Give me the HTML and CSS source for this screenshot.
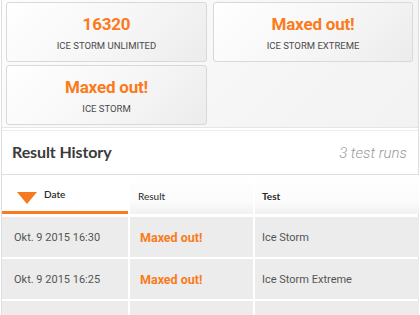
FILE: index.html
```html
<!DOCTYPE html>
<html>
<head>
<meta charset="utf-8">
<link rel="stylesheet" href="styles.css">
</head>
<body>
<div class="app">
  <div class="cards">
    <div class="card">
      <div class="score">16320</div>
      <div class="label">ICE STORM UNLIMITED</div>
    </div>
    <div class="card">
      <div class="score">Maxed out!</div>
      <div class="label">ICE STORM EXTREME</div>
    </div>
    <div class="card">
      <div class="score">Maxed out!</div>
      <div class="label">ICE STORM</div>
    </div>
  </div>
  <div class="history">
    <div class="hist-head">
      <h2 class="hist-title">Result History</h2>
      <span class="hist-count">3 test runs</span>
    </div>
    <div class="table">
      <div class="th th-date active"><span class="tri"></span>Date</div>
      <div class="th th-result">Result</div>
      <div class="th th-test">Test</div>

      <div class="td date">Okt. 9 2015 16:30</div>
      <div class="td result">Maxed out!</div>
      <div class="td test">Ice Storm</div>

      <div class="td date">Okt. 9 2015 16:25</div>
      <div class="td result">Maxed out!</div>
      <div class="td test">Ice Storm Extreme</div>

      <div class="td date"></div>
      <div class="td result"></div>
      <div class="td test"></div>
    </div>
  </div>
</div>
</body>
</html>
```

FILE: styles.css
```css
html, body {
  margin: 0;
  padding: 0;
  background: #fff;
  height: 315px;
  overflow: hidden;
}
.app {
  margin-left: 1px;
  width: 416px;
  border-left: 1px solid #dedede;
  border-right: 1px solid #dedede;
  min-height: 315px;
  font-family: Roboto, "Liberation Sans", sans-serif;
}
.cards {
  display: grid;
  grid-template-columns: 201px 200px;
  grid-auto-rows: 60px;
  column-gap: 6px;
  row-gap: 3px;
  padding: 2px 0 2px 4px;
  background: linear-gradient(135deg, #fdfdfd 0%, #f2f2f2 100%);
  border-bottom: 1px solid #e6e6e6;
}
.card {
  box-sizing: border-box;
  border: 1px solid #d9d9d9;
  border-radius: 3px;
  background: linear-gradient(135deg, #ffffff 0%, #f6f6f6 55%, #ececec 100%);
  box-shadow: 0 0 1px rgba(0,0,0,0.05);
  display: flex;
  flex-direction: column;
  align-items: center;
  padding-top: 11px;
}
.score {
  color: #fb7b1c;
  font-weight: 700;
  font-size: 17px;
  line-height: 20px;
  letter-spacing: -0.2px;
}
.label {
  margin-top: 6px;
  font-size: 9.5px;
  line-height: 11px;
  color: #4a4a4a;
}
.history {
  margin-top: 2px;
  border-top: 1px solid #ececec;
}
.hist-head {
  height: 43px;
  display: flex;
  align-items: center;
  justify-content: space-between;
  padding: 0 11px 0 10px;
  border-bottom: 1px solid #dddddd;
}
.hist-title {
  margin: 0;
  font-family: Lato, "Liberation Sans", sans-serif;
  font-weight: 700;
  font-size: 16px;
  color: #3a3a3a;
  letter-spacing: -0.1px;
  padding-bottom: 2px;
}
.hist-count {
  font-style: italic;
  font-size: 15px;
  color: #9a9a9a;
  font-weight: 300;
}
.table {
  display: grid;
  grid-template-columns: 126px 123px 164px;
  grid-template-rows: 40px;
  grid-auto-rows: 40px;
  column-gap: 2px;
  row-gap: 2px;
  background: #fff;
}
.th {
  display: flex;
  align-items: center;
  font-family: Lato, "Liberation Sans", sans-serif;
  font-size: 10px;
  color: #2a2a2a;
  background: linear-gradient(180deg, #ffffff 0%, #fbfbfb 70%, #f1f1f1 100%);
  margin-bottom: 1px;
}
.th-date {
  padding-left: 15px;
  padding-top: 2px;
  box-sizing: border-box;
  font-weight: 600;
  border-bottom: 3px solid #fb7b1c;
  background: #fff;
}
.th-result {
  padding-left: 8px;
  padding-top: 2px;
}
.th-test {
  padding-left: 7px;
  padding-top: 2px;
  font-weight: 700;
}
.tri {
  width: 0;
  height: 0;
  border-left: 10px solid transparent;
  border-right: 10px solid transparent;
  border-top: 12px solid #f47b1e;
  margin-right: 7px;
  margin-top: 8px;
}
.td {
  background: #ececec;
  display: flex;
  align-items: center;
  font-size: 11px;
  color: #555;
}
.date {
  padding-left: 12px;
}
.result {
  padding-left: 10px;
  color: #fb7b1c;
  font-weight: 700;
  font-size: 12.5px;
}
.test {
  padding-left: 7px;
}
```
